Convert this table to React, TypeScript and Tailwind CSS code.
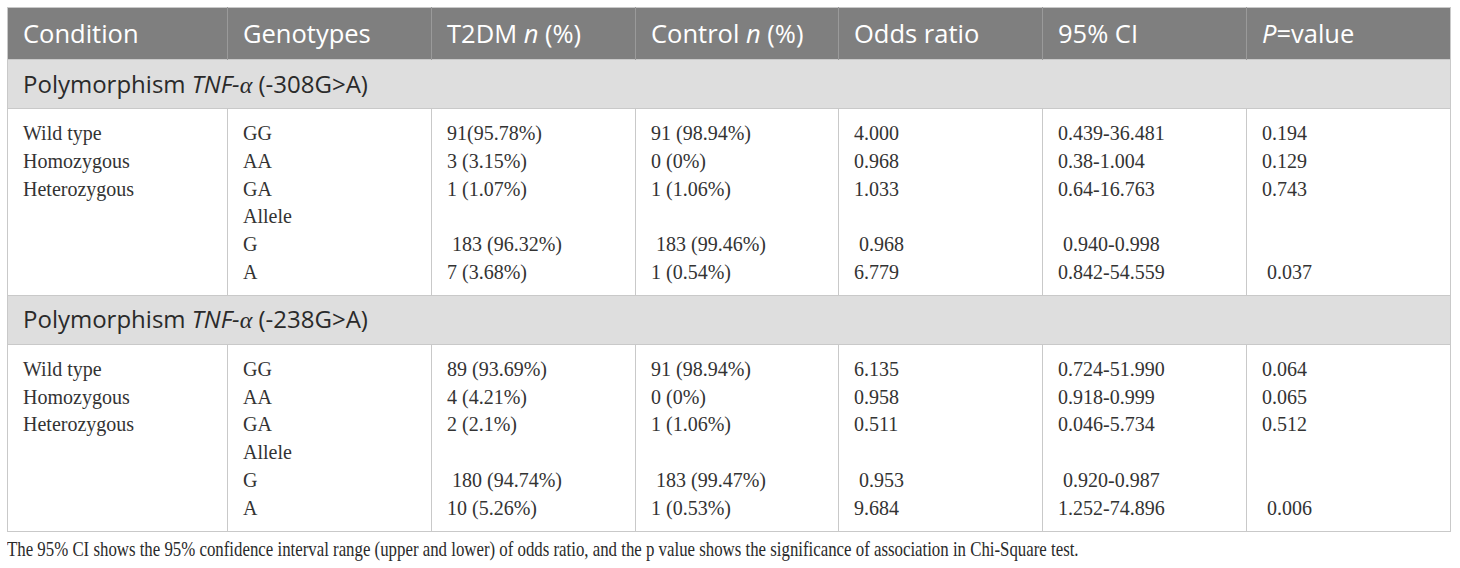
import React from 'react';

type Row = string[];

const sections: { locus: string; rows: Row[] }[] = [
  {
    locus: '(-308G>A)',
    rows: [
      ['Wild type', 'GG', '91(95.78%)', '91 (98.94%)', '4.000', '0.439-36.481', '0.194'],
      ['Homozygous', 'AA', '3 (3.15%)', '0 (0%)', '0.968', '0.38-1.004', '0.129'],
      ['Heterozygous', 'GA', '1 (1.07%)', '1 (1.06%)', '1.033', '0.64-16.763', '0.743'],
      ['', 'Allele', '', '', '', '', ''],
      ['', 'G', '\u00a0183 (96.32%)', '\u00a0183 (99.46%)', '\u00a00.968', '\u00a00.940-0.998', ''],
      ['', 'A', '7 (3.68%)', '1 (0.54%)', '6.779', '0.842-54.559', '\u00a00.037'],
    ],
  },
  {
    locus: '(-238G>A)',
    rows: [
      ['Wild type', 'GG', '89 (93.69%)', '91 (98.94%)', '6.135', '0.724-51.990', '0.064'],
      ['Homozygous', 'AA', '4 (4.21%)', '0 (0%)', '0.958', '0.918-0.999', '0.065'],
      ['Heterozygous', 'GA', '2 (2.1%)', '1 (1.06%)', '0.511', '0.046-5.734', '0.512'],
      ['', 'Allele', '', '', '', '', ''],
      ['', 'G', '\u00a0180 (94.74%)', '\u00a0183 (99.47%)', '\u00a00.953', '\u00a00.920-0.987', ''],
      ['', 'A', '10 (5.26%)', '1 (0.53%)', '9.684', '1.252-74.896', '\u00a00.006'],
    ],
  },
];

const widths = ['w-[220px]', 'w-[204px]', 'w-[204px]', 'w-[203px]', 'w-[204px]', 'w-[204px]', 'w-[204px]'];

export default function App() {
  return (
    <div className="min-h-[568px] bg-white p-[7px] pr-0">
      <table className="w-[1444px] table-fixed border-collapse border border-[#c9c9c9]">
        <colgroup>
          {widths.map((w, i) => (
            <col key={i} className={w} />
          ))}
        </colgroup>
        <thead>
          <tr className="h-[52px] bg-[#7f7f7f] text-left text-[25.5px] font-normal text-white [font-family:'Open_Sans',sans-serif]">
            <th className="border-r border-[#9a9a9a] px-[15px] font-normal">Condition</th>
            <th className="border-r border-[#9a9a9a] px-[15px] font-normal">Genotypes</th>
            <th className="border-r border-[#9a9a9a] px-[15px] font-normal">
              T2DM <i>n</i> (%)
            </th>
            <th className="border-r border-[#9a9a9a] px-[15px] font-normal">
              Control <i>n</i> (%)
            </th>
            <th className="border-r border-[#9a9a9a] px-[15px] font-normal">Odds ratio</th>
            <th className="border-r border-[#9a9a9a] px-[15px] font-normal">95% CI</th>
            <th className="px-[15px] font-normal">
              <i>P</i>=value
            </th>
          </tr>
        </thead>
        <tbody>
          {sections.map((s) => (
            <React.Fragment key={s.locus}>
              <tr className="h-[49px] bg-[#dedede]">
                <td
                  colSpan={7}
                  className="border-y border-[#c9c9c9] px-[15px] text-[24px] text-[#2a2a2a] [font-family:'Open_Sans',sans-serif]"
                >
                  Polymorphism <i>TNF-</i>
                  <i className="[font-family:'Liberation_Serif',serif]">α</i> {s.locus}
                </td>
              </tr>
              <tr>
                {widths.map((_, c) => (
                  <td
                    key={c}
                    className="border-r border-[#c9c9c9] px-[15px] pt-[11px] pb-[8px] align-top text-[20px] leading-[27.8px] text-[#333] [font-family:'Liberation_Serif',serif] last:border-r-0"
                  >
                    {s.rows.map((r, i) => (
                      <div key={i} className="h-[27.8px] whitespace-pre">
                        {r[c]}
                      </div>
                    ))}
                  </td>
                ))}
              </tr>
            </React.Fragment>
          ))}
        </tbody>
      </table>
      <p className="mt-[5px] origin-left scale-x-[0.801] whitespace-nowrap text-[21px] leading-[25px] text-[#2a2a2a] [font-family:'Liberation_Serif',serif]">
        The 95% CI shows the 95% confidence interval range (upper and lower) of odds ratio, and the p value shows
        the significance of association in Chi-Square test.
      </p>
    </div>
  );
}
